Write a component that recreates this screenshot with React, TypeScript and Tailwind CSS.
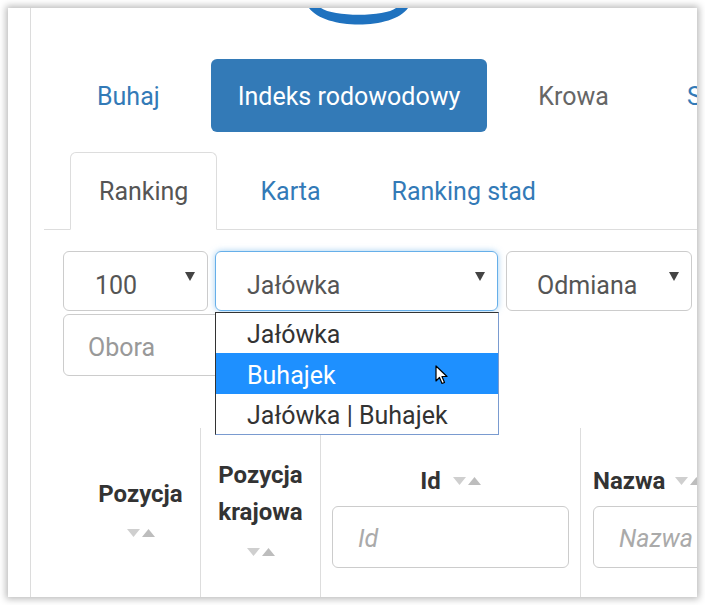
import React from "react";

function Tri({ className }: { className?: string }) {
  return (
    <svg width="10" height="9" viewBox="0 0 10 9" className={className}>
      <path d="M0 0 L10 0 L5 9 Z" fill="#444" />
    </svg>
  );
}

function Sort() {
  return (
    <span className="inline-flex items-center gap-[2px]">
      <svg width="13" height="8" viewBox="0 0 13 8">
        <path d="M0 0 L13 0 L6.5 8 Z" fill="#cfcfcf" />
      </svg>
      <svg width="13" height="8" viewBox="0 0 13 8">
        <path d="M0 8 L13 8 L6.5 0 Z" fill="#bdbdbd" />
      </svg>
    </span>
  );
}

export default function App() {
  return (
    <div className="w-[705px] h-[605px] bg-white p-[8px] overflow-hidden font-[Roboto,sans-serif]">
      <div className="w-[689px] h-[589px] bg-white shadow-[0_0_7px_2px_rgba(0,0,0,0.28)] flex overflow-hidden">
        <div className="w-[23px] shrink-0 border-r border-[#dcdcdc]" />
        <div className="flex-1 relative overflow-hidden">
          {/* logo */}
          <div className="h-[51px]">
            <svg width="110" height="18" viewBox="0 0 110 18" className="ml-[274px]">
              <path d="M4 0 C 20 22, 88 22, 103 0 L 91 0 C 80 9, 28 9, 16 0 Z" fill="#1f72bf" />
            </svg>
          </div>
          {/* pills */}
          <div className="flex gap-[24px] ml-[39px] h-[73px] text-[25px] whitespace-nowrap">
            <div className="px-[27px] pt-[3px] flex items-center text-[#337ab7] shrink-0">Buhaj</div>
            <div className="px-[27px] pt-[3px] flex items-center text-white bg-[#337ab7] rounded-[6px] shrink-0">
              Indeks rodowodowy
            </div>
            <div className="px-[27px] pt-[3px] flex items-center text-[#666] shrink-0">Krowa</div>
            <div className="px-[27px] pt-[3px] flex items-center text-[#337ab7] shrink-0">Stado</div>
          </div>
          {/* tabs */}
          <div className="mt-[20px] ml-[13px] pl-[26px] flex gap-[15px] h-[78px] border-b border-[#ddd] text-[25px] whitespace-nowrap">
            <div className="px-[28px] pt-[2px] h-[78px] flex items-center text-[#555] bg-white border border-[#ddd] border-b-transparent rounded-t-[6px] shrink-0">
              Ranking
            </div>
            <div className="px-[28px] pt-[2px] h-[78px] flex items-center text-[#337ab7] shrink-0">Karta</div>
            <div className="px-[28px] pt-[2px] h-[78px] flex items-center text-[#337ab7] shrink-0">Ranking stad</div>
          </div>
          {/* selects */}
          <div className="mt-[21px] ml-[32px] flex text-[25px] text-[#555] whitespace-nowrap">
            <div className="w-[145px] h-[60px] border border-[#ccc] rounded-[6px] flex items-start justify-between pl-[31px] pr-[12px] shrink-0">
              <span className="mt-[19px] leading-[30px]">100</span>
              <Tri className="mt-[20px]" />
            </div>
            <div className="ml-[7px] w-[283px] h-[60px] border border-[#66afe9] rounded-[6px] shadow-[0_0_6px_rgba(102,175,233,0.6)] flex items-start justify-between pl-[31px] pr-[12px] shrink-0">
              <span className="mt-[19px] leading-[30px]">Jałówka</span>
              <Tri className="mt-[20px]" />
            </div>
            <div className="ml-[8px] w-[186px] h-[60px] border border-[#ccc] rounded-[6px] flex items-start justify-between pl-[30px] pr-[12px] shrink-0">
              <span className="mt-[19px] leading-[30px]">Odmiana</span>
              <Tri className="mt-[20px]" />
            </div>
          </div>
          <div className="mt-[3px] ml-[32px] w-[200px] h-[62px] border border-[#ccc] rounded-[6px] flex items-center pt-[6px] pl-[24px] text-[25px] text-[#999]">
            Obora
          </div>
          {/* table header */}
          <div className="mt-[52px] flex h-[200px] text-[24px] font-bold text-[#333] whitespace-nowrap">
            <div className="w-[170px] shrink-0 border-r border-[#ddd] pl-[50px] pt-[48px] flex flex-col items-center">
              <div className="leading-[36px]">Pozycja</div>
              <div className="mt-[11px] leading-[12px]">
                <Sort />
              </div>
            </div>
            <div className="w-[120px] shrink-0 border-r border-[#ddd] pt-[29px] flex flex-col items-center">
              <div className="leading-[37px] text-center">
                Pozycja
                <br />
                krajowa
              </div>
              <div className="mt-[11px] leading-[12px]">
                <Sort />
              </div>
            </div>
            <div className="w-[260px] shrink-0 border-r border-[#ddd] pt-[35px] px-[11px] flex flex-col items-center">
              <div className="leading-[36px] flex items-center gap-[12px]">
                <span>Id</span>
                <Sort />
              </div>
              <div className="mt-[7px] w-full h-[62px] border border-[#ccc] rounded-[6px] flex items-center pt-[4px] pl-[25px] text-[25px] font-normal italic text-[#aaa]">
                Id
              </div>
            </div>
            <div className="w-[200px] shrink-0 pt-[35px] pl-[12px] flex flex-col">
              <div className="leading-[36px] flex items-center gap-[10px]">
                <span>Nazwa</span>
                <Sort />
              </div>
              <div className="mt-[7px] w-[240px] h-[62px] border border-[#ccc] rounded-[6px] flex items-center pt-[4px] pl-[25px] text-[25px] font-normal italic text-[#aaa]">
                Nazwa
              </div>
            </div>
          </div>
          {/* dropdown overlay */}
          <div className="absolute left-[184px] top-[304px] w-[284px] bg-white border border-[#333] border-r-[#7a9bd0] border-b-[#7a9bd0] text-[25px] text-[#333] whitespace-nowrap">
            <div className="h-[40px] flex items-center pt-[4px] pl-[31px]">Jałówka</div>
            <div className="h-[41px] flex items-center pt-[4px] pl-[31px] bg-[#1e90ff] text-white relative">
              Buhajek
              <svg width="14" height="21" viewBox="0 0 14 21" className="absolute left-[219px] top-[12px]">
                <path d="M1 1 L1 16 L4.5 12.5 L7 18.5 L9.5 17.5 L7 11.5 L12 11.5 Z" fill="white" stroke="black" strokeWidth="1.2" strokeLinejoin="round" />
              </svg>
            </div>
            <div className="h-[40px] flex items-center pt-[4px] pl-[31px]">Jałówka | Buhajek</div>
          </div>
        </div>
      </div>
    </div>
  );
}
